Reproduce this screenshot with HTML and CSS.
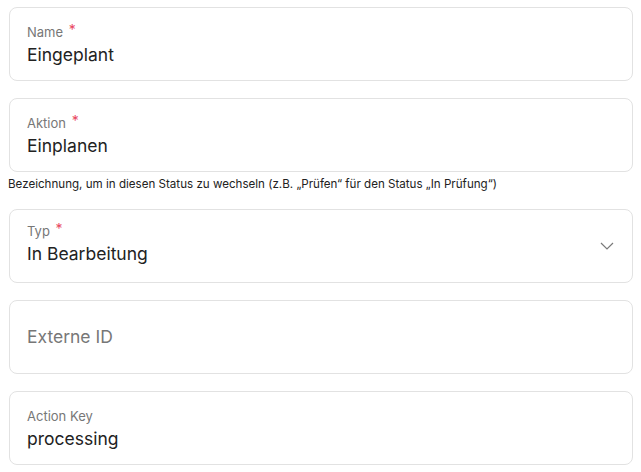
FILE: index.html
```html
<!DOCTYPE html>
<html lang="de">
<head>
<meta charset="utf-8">
<title>Status</title>
<link rel="stylesheet" href="styles.css">
</head>
<body>
<div class="form">
  <div class="field">
    <div class="label">Name <span class="req">*</span></div>
    <div class="value">Eingeplant</div>
  </div>
  <div class="group">
    <div class="field">
      <div class="label">Aktion <span class="req">*</span></div>
      <div class="value">Einplanen</div>
    </div>
    <div class="help">Bezeichnung, um in diesen Status zu wechseln (z.B. „Prüfen“ für den Status „In Prüfung“)</div>
  </div>
  <div class="field select">
    <div class="label">Typ <span class="req">*</span></div>
    <div class="value">In Bearbeitung</div>
    <svg class="chev" width="14" height="8" viewBox="0 0 14 8"><path d="M1 1 L7 7 L13 1" fill="none" stroke="#7a7a7a" stroke-width="1.2"/></svg>
  </div>
  <div class="field empty">
    <div class="placeholder">Externe ID</div>
  </div>
  <div class="field">
    <div class="label">Action Key</div>
    <div class="value">processing</div>
  </div>
</div>
</body>
</html>
```
FILE: styles.css
```css
* { box-sizing: border-box; }
html, body { margin: 0; padding: 0; background: #fff; }
body { font-family: Inter, "Noto Sans", sans-serif; color: #222; }
.form {
  padding: 7px 8px 0 9px;
  display: flex;
  flex-direction: column;
  gap: 17.3px;
}
.field {
  position: relative;
  height: 74px;
  border: 1px solid #e2e2e2;
  border-radius: 8px;
  padding: 15px 17px 0 17px;
  display: flex;
  flex-direction: column;
}
.select { padding-top: 12px; }
.label {
  font-size: 13px;
  line-height: 18px;
  color: #777;
}
.req {
  color: #e8475f;
  font-size: 14px;
  margin-left: 2px;
  position: relative;
  top: -2px;
}
.value {
  font-size: 17.5px;
  line-height: 26px;
  margin-top: 1px;
  color: #222;
}
.help {
  font-size: 11.6px;
  line-height: 14px;
  color: #222;
  margin: 5px 0 0 -1px;
}
.group { display: flex; flex-direction: column; }
.empty { justify-content: center; padding-top: 0; }
.placeholder { font-size: 17.5px; color: #777; }
.chev { position: absolute; right: 18px; top: 32px; }
```
